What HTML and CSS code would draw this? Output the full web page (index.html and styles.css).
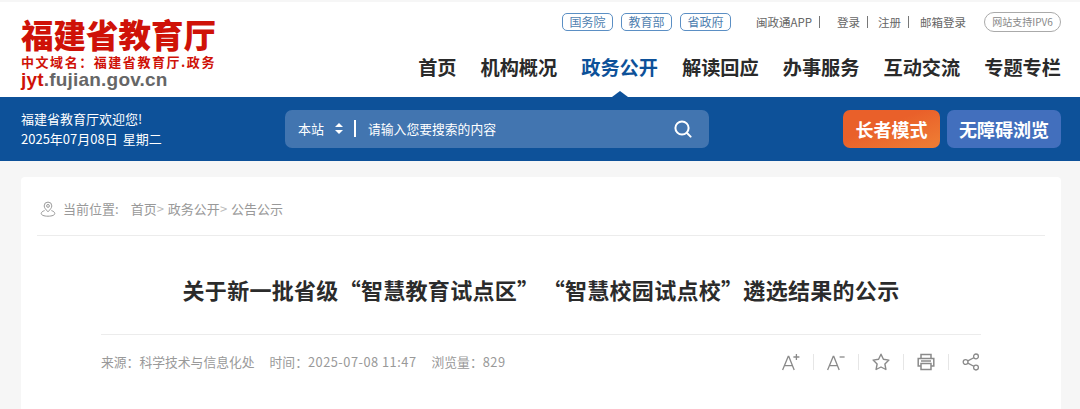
FILE: index.html
```html
<!DOCTYPE html>
<html lang="zh-CN">
<head>
    <meta charset="UTF-8">
    <meta name="viewport" content="width=device-width, initial-scale=1.0">
    <title>福建省教育厅</title>
    <link rel="stylesheet" href="styles.css">
</head>
<body>
    <div class="header">
        <div class="logo">
            <div class="logo-name">福建省教育厅</div>
            <div class="logo-domain">中文域名：福建省教育厅.政务</div>
            <div class="logo-url"><span>jyt</span>.fujian.gov.cn</div>
        </div>
        <div class="header-right">
            <div class="top-links">
                <a class="pill">国务院</a>
                <a class="pill">教育部</a>
                <a class="pill">省政府</a>
                <div class="user-links">
                    <a class="sep app">闽政通APP</a>
                    <a class="sep">登录</a>
                    <a class="sep wide">注册</a>
                    <a>邮箱登录</a>
                </div>
                <span class="ipv6">网站支持IPV6</span>
            </div>
            <div class="nav">
                <a>首页</a>
                <a>机构概况</a>
                <a class="active">政务公开</a>
                <a>解读回应</a>
                <a>办事服务</a>
                <a>互动交流</a>
                <a>专题专栏</a>
            </div>
        </div>
    </div>

    <div class="bluebar">
        <div class="welcome">
            <p>福建省教育厅欢迎您!</p>
            <p>2025年07月08日 星期二</p>
        </div>
        <div class="search">
            <span class="scope">本站</span>
            <svg class="updown" width="8" height="11" viewBox="0 0 8 11"><path d="M4 0L8 4H0ZM0 7H8L4 11Z" fill="#fff"/></svg>
            <span class="search-line"></span>
            <span class="placeholder">请输入您要搜索的内容</span>
            <svg class="search-icon" width="18" height="18" viewBox="0 0 18 18" fill="none" stroke="#fff" stroke-width="2" stroke-linecap="round"><circle cx="8" cy="8" r="6.6"/><path d="M13 13l3.6 3.6"/></svg>
        </div>
        <div class="modes">
            <a class="mode orange">长者模式</a>
            <a class="mode blue">无障碍浏览</a>
        </div>
    </div>

    <div class="card">
        <div class="crumbs">
            <svg class="pin" width="16" height="16" viewBox="0 0 16 16" fill="none" stroke="#999" stroke-width="1"><path d="M8 10.8C5.8 8.4 4.2 6.8 4.2 4.9a3.8 3.8 0 0 1 7.6 0C11.8 6.8 10.2 8.4 8 10.8Z"/><circle cx="8" cy="4.9" r="1.4"/><path d="M4.6 9.6C2.6 10.2 1.2 11.2 1.2 12.6c0 1.4 2.6 2.6 6.8 2.6s6.8-1.2 6.8-2.6c0-1.4-1.4-2.4-3.4-3"/></svg>
            <span class="crumb-label">当前位置:</span>
            <span>首页<b>&gt;</b></span>
            <span>政务公开<b>&gt;</b></span>
            <span>公告公示</span>
        </div>
        <h1 class="title">关于新一批省级“智慧教育试点区” “智慧校园试点校”遴选结果的公示</h1>
        <div class="meta">
            <div class="meta-text">
                <span>来源：科学技术与信息化处</span>
                <span>时间：<span class="num">2025-07-08 11:47</span></span>
                <span>浏览量：<span class="num">829</span></span>
            </div>
            <div class="tools">
                <svg width="18" height="18" viewBox="0 0 18 18" fill="none" stroke="#8a8a8a" stroke-width="1.3"><path d="M.6 17L6.2 3.5h.6L12.2 17M2.6 12.6h7.8"/><path d="M14.4 1v6M11.4 4h6"/></svg>
                <i></i>
                <svg width="18" height="18" viewBox="0 0 18 18" fill="none" stroke="#8a8a8a" stroke-width="1.3"><path d="M.6 17L6.2 3.5h.6L12.2 17M2.6 12.6h7.8"/><path d="M12.6 4h5"/></svg>
                <i></i>
                <svg width="18" height="18" viewBox="0 0 18 18" fill="none" stroke="#8a8a8a" stroke-width="1.4" stroke-linejoin="round"><path d="M9 1.2l2.4 5.1 5.5.8-4 3.900 1 5.500L9 14l-4.900 2.500 1-5.500-4-3.900 5.500-.8Z"/></svg>
                <i></i>
                <svg width="18" height="18" viewBox="0 0 18 18" fill="none" stroke="#8a8a8a" stroke-width="1.5"><path d="M4 5V1.500h10V5M4 13H1.200V5.600h15.600V13H14"/><path d="M4 10.500h10v6H4ZM4 8h10"/></svg>
                <i></i>
                <svg width="18" height="18" viewBox="0 0 18 18" fill="none" stroke="#8a8a8a" stroke-width="1.300"><circle cx="3.600" cy="9" r="2.400"/><circle cx="14" cy="3.400" r="2.400"/><circle cx="14" cy="14.600" r="2.400"/><path d="M5.800 7.900l6-3.200M5.800 10.100l6 3.200"/></svg>
            </div>
        </div>
    </div>
</body>
</html>
```

FILE: styles.css
```css
* {
    margin: 0;
    padding: 0;
    box-sizing: border-box;
}

html, body {
    height: 409px;
    overflow: hidden;
}

body {
    font-family: "Noto Sans CJK SC", "Noto Sans", sans-serif;
    background: #f6f6f6;
    padding-top: 2px;
}

.header {
    height: 95px;
    background: white;
    display: flex;
    justify-content: space-between;
    padding: 0 19px 0 21px;
}

.logo {
    padding-top: 14px;
}

.logo-name {
    font-size: 32.5px;
    line-height: 36px;
    font-weight: 900;
    color: #cf1208;
    white-space: nowrap;
}

.logo-domain {
    font-size: 13px;
    line-height: 17px;
    margin-top: 1px;
    font-weight: 700;
    letter-spacing: 1.55px;
    color: #cf1208;
    white-space: nowrap;
}

.logo-url {
    font-family: "Liberation Sans", sans-serif;
    font-size: 19px;
    line-height: 20px;
    font-weight: 700;
    letter-spacing: 0.2px;
    color: #666;
}

.logo-url span {
    color: #cf1208;
}

.header-right {
    display: flex;
    flex-direction: column;
    align-items: flex-end;
}

.top-links {
    display: flex;
    align-items: center;
    height: 20px;
    margin-top: 10px;
    font-size: 12px;
    color: #666;
}

.pill {
    width: 51px;
    height: 18px;
    margin-right: 8px;
    border: 1px solid #5b8fc4;
    border-radius: 5px;
    color: #4f7fb0;
    line-height: 16px;
    text-align: center;
}

.user-links {
    display: flex;
    margin-left: 17px;
    margin-right: 18px;
    font-size: 11.5px;
    line-height: 18px;
    white-space: nowrap;
}

.sep {
    padding-right: 8px;
    margin-right: 10px;
    position: relative;
}

.sep.app {
    margin-right: 17px;
}

.sep.wide {
    margin-right: 11px;
}

.sep::after {
    content: "";
    position: absolute;
    right: 0;
    top: 3px;
    width: 1px;
    height: 12px;
    background: #777;
}

.ipv6 {
    width: 77px;
    height: 20px;
    border: 1px solid #aaa;
    border-radius: 10px;
    font-size: 10px;
    line-height: 18px;
    text-align: center;
    color: #888;
}

.nav {
    display: flex;
    gap: 24px;
    margin-top: 20px;
}

.nav a {
    font-size: 19.2px;
    line-height: 30px;
    font-weight: 700;
    color: #2a2a2a;
    position: relative;
    white-space: nowrap;
}

.nav a.active {
    color: #0d5199;
}

/* 当前栏目下方的小三角 */
.nav a.active::after {
    content: "";
    position: absolute;
    left: 50%;
    bottom: -15px;
    margin-left: -8px;
    border-left: 8px solid transparent;
    border-right: 8px solid transparent;
    border-bottom: 6px solid #0d5199;
}

.bluebar {
    height: 64px;
    background: #0d5199;
    color: white;
    display: flex;
    align-items: center;
    padding: 0 19px 0 21px;
}

.welcome {
    width: 264px;
    font-size: 13px;
    line-height: 20px;
    word-spacing: 2px;
}

.search {
    width: 424px;
    height: 38px;
    background: #4275b0;
    border-radius: 7px;
    display: flex;
    align-items: center;
    padding: 0 17px 1px 13px;
    font-size: 13px;
}

.updown {
    margin-left: 11px;
}

.search-line {
    width: 2px;
    height: 17px;
    background: white;
    margin: 0 12px 0 11px;
}

.placeholder {
    flex: 1;
    font-size: 12.8px;
}

.modes {
    display: flex;
    gap: 7px;
    margin-left: auto;
}

.mode {
    height: 38px;
    border-radius: 7px;
    font-size: 18px;
    font-weight: 700;
    line-height: 38px;
    text-align: center;
}

.mode.orange {
    width: 97px;
    background: linear-gradient(160deg, #e9602a 40%, #ee7a33 90%);
}

.mode.blue {
    width: 114px;
    background: #426fbd;
}

.card {
    margin: 16px 19px 0 21px;
    height: 240px;
    background: white;
    border-radius: 4px;
    padding: 0 16px;
}

.crumbs {
    height: 59px;
    border-bottom: 1px solid #ececec;
    display: flex;
    align-items: center;
    gap: 4px;
    padding: 5px 0 0 3px;
    font-size: 13px;
    color: #999;
}

.crumbs b {
    font-weight: 400;
    color: #bbb;
}

.pin {
    margin-right: 3px;
}

.crumb-label {
    margin-right: 8px;
}

.title {
    margin: 0 64px;
    height: 99px;
    border-bottom: 1px solid #ececec;
    font-size: 22px;
    line-height: 107px;
    font-weight: 700;
    letter-spacing: 0.3px;
    word-spacing: -2px;
    text-spacing-trim: space-all;
    color: #2b2b2b;
    text-align: center;
    white-space: nowrap;
}

.meta {
    margin: 0 64px;
    height: 54px;
    display: flex;
    justify-content: space-between;
    align-items: center;
    font-size: 12.8px;
    color: #999;
}

.meta-text {
    display: flex;
    gap: 15px;
    margin-bottom: 2px;
}

.num {
    letter-spacing: 0.5px;
}

.tools {
    display: flex;
    align-items: center;
    gap: 13px;
    padding-right: 1px;
}

.tools i {
    width: 1px;
    height: 16px;
    background: #e6e6e6;
}
```
